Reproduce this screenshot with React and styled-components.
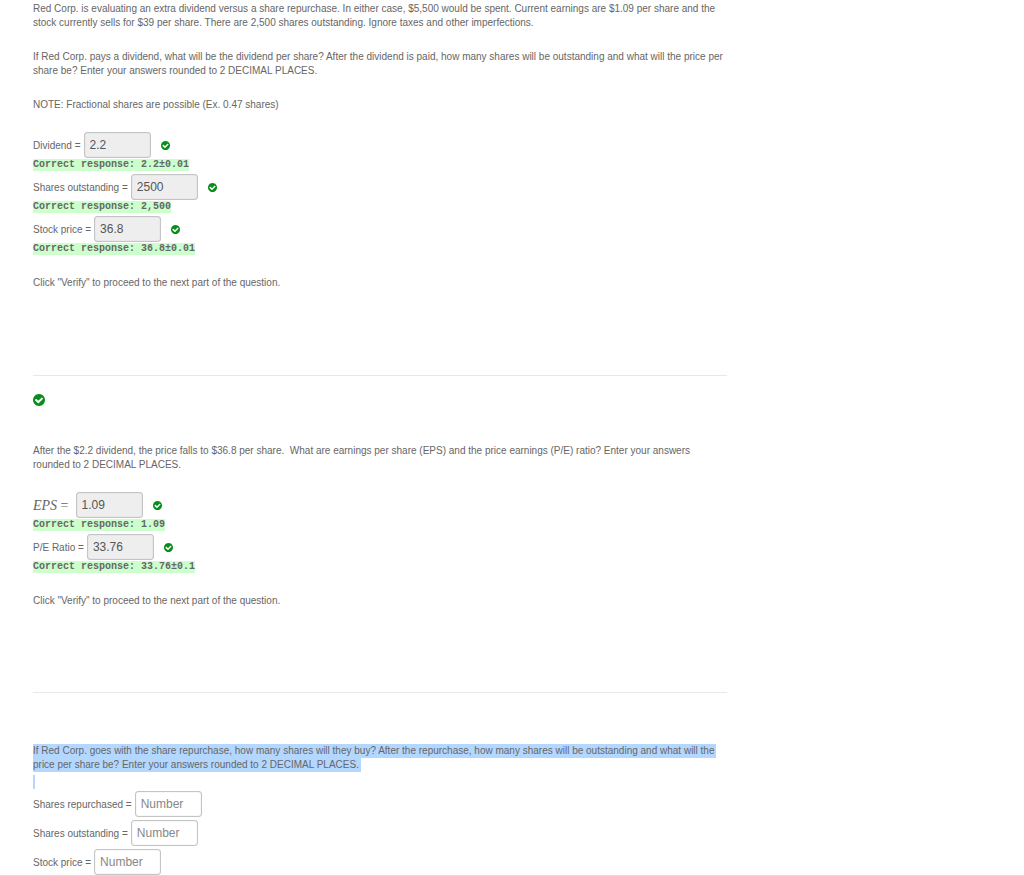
import React from 'react';
import styled, { createGlobalStyle } from 'styled-components';

const GlobalStyle = createGlobalStyle`
  * {
    box-sizing: border-box;
  }
  body {
    margin: 0;
    background: #fff;
    color: #666;
    font-family: "Liberation Sans", Arial, sans-serif;
    font-size: 10px;
    line-height: 14px;
  }
`
const Page = styled.main`
  padding: 2px 33px 0;
  border-bottom: 1px solid #ddd;
`
const Column = styled.div`
  max-width: 694px;
`
const Part = styled.section`
  padding-top: ${props => props.$top || 0}px;
  padding-bottom: ${props => props.$bottom || 0}px;
  & + & {
    border-top: 1px solid #e8e8e8;
  }
`
const Text = styled.p`
  margin: 0 0 20px;
`
const Hint = styled.p`
  margin: 21px 0 0;
`
const Answers = styled.div`
  display: flex;
  flex-direction: column;
  gap: 3px;
`
const Row = styled.div`
  display: flex;
  align-items: center;
  height: 26px;
`
const Label = styled.label`
  padding-top: 2px;
  margin-right: 3px;
  white-space: pre;
`
const MathLabel = styled(Label)`
  margin-right: 7px;
  font-family: "Liberation Serif", "Times New Roman", serif;
  font-size: 14px;
`
const Input = styled.input`
  width: 67px;
  height: 26px;
  padding: 0 5px;
  border: 1px solid #c4c4c4;
  border-radius: 3px;
  box-shadow: inset 0 0 1px #bbb;
  background: #fff;
  color: #555;
  font-family: inherit;
  font-size: 12px;
  &:read-only {
    background: #eee;
  }
  &::placeholder {
    color: #888;
    opacity: 1;
  }
`
const CheckIcon = styled.svg`
  display: block;
  width: ${props => props.$size}px;
  height: ${props => props.$size}px;
  margin-left: ${props => props.$gap || 0}px;
  fill: #078d1b;
`
const Response = styled.div`
  width: fit-content;
  height: 12px;
  margin-top: 1px;
  background: #cfc;
  font-family: "Liberation Mono", "Courier New", monospace;
  font-weight: bold;
  line-height: 12px;
`
const Selected = styled.span`
  padding: 1px 2px 2px 0;
  background: #b3d7ff;
  box-decoration-break: clone;
  -webkit-box-decoration-break: clone;
`
const SelectedBreak = styled.div`
  width: 2px;
  height: 14px;
  margin: 3px 0 2px;
  background: #b3d7ff;
`
const Status = styled.div`
  margin-bottom: 38px;
`

const Check = ({ size, gap }) => {
  return (
    <CheckIcon $size={size} $gap={gap} viewBox="0 0 1536 1536" role="img" aria-label="Correct">
      <path d="M1284 606q0-28-18-46l-91-90q-19-19-45-19t-45 19l-408 407-226-226q-19-19-45-19t-45 19l-91 90q-18 18-18 46 0 27 18 45l362 362q19 19 45 19 27 0 46-19l543-543q18-18 18-45zm252 162q0 209-103 385.500t-279.500 279.500-385.500 103-385.500-103-279.500-279.500-103-385.500 103-385.500 279.500-279.500 385.500-103 385.500 103 279.500 279.500 103 385.500z" />
    </CheckIcon>
  );
};

const Answer = ({ id, label, math, value, correct }) => {
  return (
    <div>
      <Row>
        {math
          ? <MathLabel htmlFor={id}><i>{math}</i> =</MathLabel>
          : <Label htmlFor={id}>{label} =</Label>}
        {value
          ? <Input id={id} defaultValue={value} readOnly />
          : <Input id={id} placeholder="Number" />}
        {correct && <Check size={9} gap={10} />}
      </Row>
      {correct && <Response>Correct response: {correct}</Response>}
    </div>
  );
};

const App = () => {
  return (
    <>
      <GlobalStyle />
      <Page>
        <Column>
          <Part $bottom={85}>
            <Text>
              Red Corp. is evaluating an extra dividend versus a share repurchase. In either case, $5,500 would be spent. Current earnings are $1.09 per share and the stock currently sells for $39 per share. There are 2,500 shares outstanding. Ignore taxes and other imperfections.
            </Text>
            <Text>
              If Red Corp. pays a dividend, what will be the dividend per share? After the dividend is paid, how many shares will be outstanding and what will the price per share be? Enter your answers rounded to 2 DECIMAL PLACES.
            </Text>
            <Text>NOTE: Fractional shares are possible (Ex. 0.47 shares)</Text>
            <Answers>
              <Answer id="dividend" label="Dividend" value="2.2" correct="2.2±0.01" />
              <Answer id="outstanding" label="Shares outstanding" value="2500" correct="2,500" />
              <Answer id="price" label="Stock price" value="36.8" correct="36.8±0.01" />
            </Answers>
            <Hint>Click "Verify" to proceed to the next part of the question.</Hint>
          </Part>
          <Part $top={18} $bottom={84}>
            <Status><Check size={12} /></Status>
            <Text>
              After the $2.2 dividend, the price falls to $36.8 per share.&nbsp; What are earnings per share (EPS) and the price earnings (P/E) ratio? Enter your answers rounded to 2 DECIMAL PLACES.
            </Text>
            <Answers>
              <Answer id="eps" math="EPS" value="1.09" correct="1.09" />
              <Answer id="pe" label="P/E Ratio" value="33.76" correct="33.76±0.1" />
            </Answers>
            <Hint>Click "Verify" to proceed to the next part of the question.</Hint>
          </Part>
          <Part $top={51}>
            <Selected>
              If Red Corp. goes with the share repurchase, how many shares will they buy? After the repurchase, how many shares will be outstanding and what will the price per share be? Enter your answers rounded to 2 DECIMAL PLACES.
            </Selected>
            <SelectedBreak />
            <Answers>
              <Answer id="repurchased" label="Shares repurchased" />
              <Answer id="outstanding-after" label="Shares outstanding" />
              <Answer id="price-after" label="Stock price" />
            </Answers>
          </Part>
        </Column>
      </Page>
    </>
  );
};

export default App;
